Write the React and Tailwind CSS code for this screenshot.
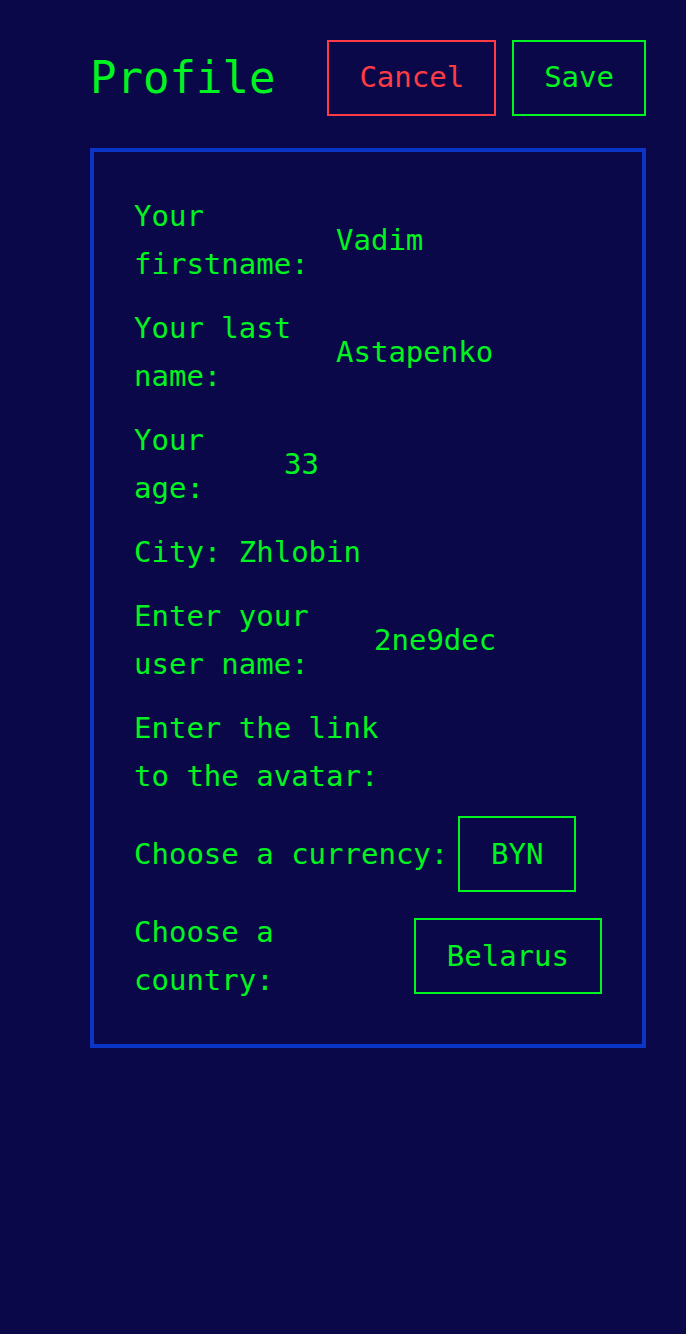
import React from 'react';

const fields = [
  { label: 'Your firstname:', value: 'Vadim', w: 'w-[202px]' },
  { label: 'Your last name:', value: 'Astapenko', w: 'w-[202px]' },
  { label: 'Your age:', value: '33', w: 'w-[150px]' },
];

export default function App() {
  return (
    <div
      className="min-h-[1334px] w-full bg-[#0a0848] text-[#00f520] pl-[90px] pr-[40px] pt-[40px]"
      style={{ fontFamily: '"DejaVu Sans Mono", "Liberation Mono", monospace' }}
    >
      {/* header */}
      <div className="flex items-center justify-between">
        <h1 className="text-[44px] leading-none">Profile</h1>
        <div className="flex gap-[16px]">
          <button className="h-[76px] px-[30px] border-2 border-[#ff3b45] text-[#ff3b45] text-[29px]">
            Cancel
          </button>
          <button className="h-[76px] px-[30px] border-2 border-[#00f520] text-[29px]">
            Save
          </button>
        </div>
      </div>

      {/* form */}
      <div className="mt-[32px] border-4 border-[#0b35c5] p-[40px] text-[29px] leading-[48px] flex flex-col gap-[16px]">
        {fields.map((f) => (
          <div key={f.label} className="flex items-center">
            <span className={f.w}>{f.label}</span>
            <span>{f.value}</span>
          </div>
        ))}
        <div>City: Zhlobin</div>
        <div className="flex items-center">
          <span className="w-[240px]">Enter your user name:</span>
          <span>2ne9dec</span>
        </div>
        <div className="flex items-center">
          <span className="w-[260px]">Enter the link to the avatar:</span>
        </div>
        <div className="flex items-center">
          <span className="w-[324px]">Choose a currency:</span>
          <div className="h-[76px] px-[31px] border-2 border-[#00f520] flex items-center">BYN</div>
        </div>
        <div className="flex items-center">
          <span className="w-[280px]">Choose a country:</span>
          <div className="h-[76px] px-[31px] border-2 border-[#00f520] flex items-center">Belarus</div>
        </div>
      </div>
    </div>
  );
}
